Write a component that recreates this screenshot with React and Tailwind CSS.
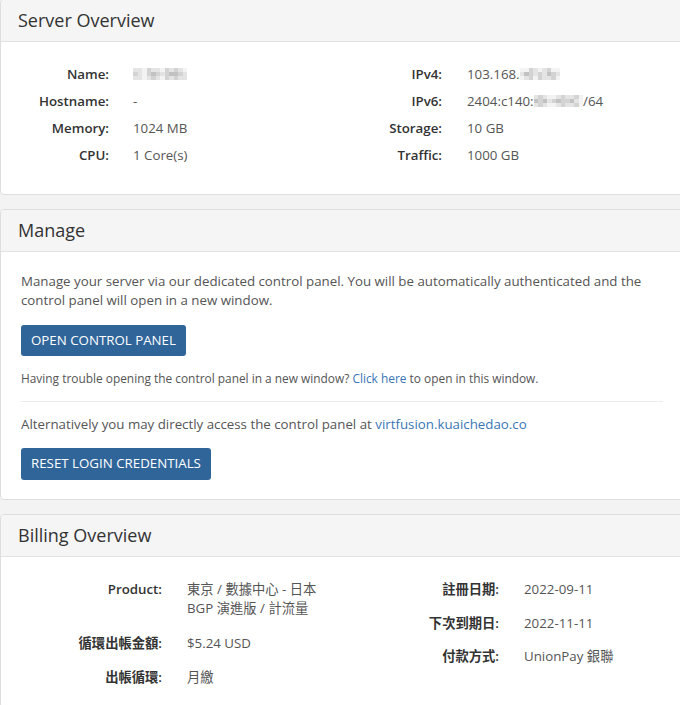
const sans = "font-['Open_Sans','Noto_Sans_CJK_TC',sans-serif]"

// pixelated (redacted) bits, each string is a row of cell shades
const shades = {
  a: 'bg-[#f3f3f3]',
  b: 'bg-[#e4e4e4]',
  c: 'bg-[#d3d3d3]',
  d: 'bg-[#c2c2c2]',
}

const mosaics = {
  name: ['bbacbbacbcba', 'cbacdcbcddcb', 'bbabcbacbcbb'],
  ipv4: ['aacbabcaa', 'bdcbcbdcb', 'abcacbbca'],
  ipv6: ['bcbaabcbbca', 'dcdbcdccdba', 'bcbaabcbbca'],
}

function Mosaic({ rows }) {
  return (
    <span className="inline-flex flex-col align-middle -mt-[2px]">
      {rows.map((r, i) => (
        <span key={i} className="flex">
          {r.split('').map((s, j) => (
            <span key={j} className={`w-[4.5px] h-[4px] ${shades[s]}`} />
          ))}
        </span>
      ))}
    </span>
  )
}

function Panel({ title, className = '', children }) {
  return (
    <div className={`bg-white border border-[#dedede] rounded-[4px] mb-[14px] ${className}`}>
      <div className="h-[42px] bg-[#f5f5f5] border-b border-[#e2e2e2] px-[17px] flex items-center text-[18px] text-[#333] rounded-t-[4px]">
        {title}
      </div>
      {children}
    </div>
  )
}

function Row({ label, children, labelW, gap, lh = 'leading-[27px]' }) {
  return (
    <div className={`flex ${lh}`}>
      <div className={`${labelW} text-right font-semibold text-[#333] shrink-0`}>{label}</div>
      <div className={`${gap} text-[#555]`}>{children}</div>
    </div>
  )
}

export default function App() {
  return (
    <div className={`min-h-screen bg-[#f3f3f3] overflow-hidden text-[13.3px] ${sans}`}>
      <div className="w-[685px] -mt-px">
        <Panel title="Server Overview">
          <div className="grid grid-cols-[333px_1fr] pl-[8px] pt-[19px] pb-[25px]">
            <div>
              <Row label="Name:" labelW="w-[100px]" gap="ml-[24px]"><Mosaic rows={mosaics.name} /></Row>
              <Row label="Hostname:" labelW="w-[100px]" gap="ml-[24px]">-</Row>
              <Row label="Memory:" labelW="w-[100px]" gap="ml-[24px]">1024 MB</Row>
              <Row label="CPU:" labelW="w-[100px]" gap="ml-[24px]">1 Core(s)</Row>
            </div>
            <div>
              <Row label="IPv4:" labelW="w-[100px]" gap="ml-[25px]">103.168.<Mosaic rows={mosaics.ipv4} /></Row>
              <Row label="IPv6:" labelW="w-[100px]" gap="ml-[25px]">2404:c140:<Mosaic rows={mosaics.ipv6} />/64</Row>
              <Row label="Storage:" labelW="w-[100px]" gap="ml-[25px]">10 GB</Row>
              <Row label="Traffic:" labelW="w-[100px]" gap="ml-[25px]">1000 GB</Row>
            </div>
          </div>
        </Panel>

        <Panel title="Manage">
          <div className="px-[20px] pt-[20px] pb-[19px] text-[#555]">
            <p className="leading-[19px] w-[642px]">
              Manage your server via our dedicated control panel. You will be automatically authenticated and the control panel will open in a new window.
            </p>
            <button className="mt-[15px] h-[31px] px-[10px] bg-[#30659a] text-white text-[13.3px] rounded-[3px] uppercase">
              Open Control Panel
            </button>
            <p className="mt-[14px] text-[11.9px] leading-[17px]">
              Having trouble opening the control panel in a new window? <a className="text-[#3a76b5]">Click here</a> to open in this window.
            </p>
            <hr className="mt-[14px] border-0 border-t border-[#ececec] w-[642px]" />
            <p className="mt-[13px] leading-[19px]">
              Alternatively you may directly access the control panel at <a className="text-[#3a76b5]">virtfusion.kuaichedao.co</a>
            </p>
            <button className="mt-[14px] h-[32px] px-[10px] bg-[#30659a] text-white text-[13.3px] rounded-[3px] uppercase">
              Reset Login Credentials
            </button>
          </div>
        </Panel>

        <Panel title="Billing Overview" className="mb-0">
          <div className="grid grid-cols-[337px_1fr] pl-[8px] pt-[23px] pb-[20px]">
            <div className="flex flex-col gap-[15.5px]">
              <Row label="Product:" labelW="w-[153px]" gap="ml-[25px]" lh="leading-[19px]">
                東京 / 數據中心 - 日本<br />BGP 演進版 / 計流量
              </Row>
              <Row label="循環出帳金額:" labelW="w-[153px]" gap="ml-[25px]" lh="leading-[19px]">$5.24 USD</Row>
              <Row label="出帳循環:" labelW="w-[153px]" gap="ml-[25px]" lh="leading-[19px]">月繳</Row>
            </div>
            <div className="flex flex-col gap-[14.5px]">
              <Row label="註冊日期:" labelW="w-[153px]" gap="ml-[25px]" lh="leading-[19px]">2022-09-11</Row>
              <Row label="下次到期日:" labelW="w-[153px]" gap="ml-[25px]" lh="leading-[19px]">2022-11-11</Row>
              <Row label="付款方式:" labelW="w-[153px]" gap="ml-[25px]" lh="leading-[19px]">UnionPay 銀聯</Row>
            </div>
          </div>
        </Panel>
      </div>
    </div>
  )
}
